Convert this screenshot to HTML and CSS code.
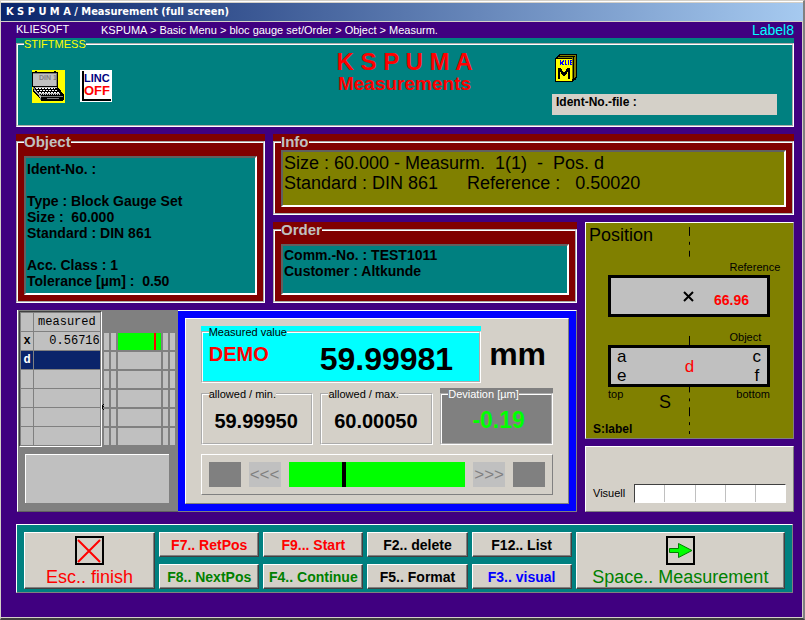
FILE: index.html
```html
<!DOCTYPE html>
<html lang="en">
<head>
<meta charset="utf-8">
<title>K S P U M A / Measurement (full screen)</title>
<link rel="stylesheet" href="styles.css">
</head>
<body>
<div class="window">
  <header class="titlebar">K S P U M A / Measurement (full screen)</header>
  <div class="desk">
    <nav class="crumbs">
      <span class="brand">KLIESOFT</span>
      <span class="path">KSPUMA &gt; Basic Menu &gt; bloc gauge set/Order &gt; Object &gt; Measurm.</span>
      <span class="tag">Label8</span>
    </nav>

    <section class="group teal banner">
      <fieldset class="frame">
        <legend class="small yellow">STIFTMESS</legend>
        <div class="banner-grid">
          <div class="tools">
            <svg class="laptop" width="33" height="33" viewBox="0 0 33 33" shape-rendering="crispEdges" role="img" aria-label="Notebook">
              <path fill="#ff0" d="M0 0h33v33H0z"/>
              <path d="M3 1h2v2H3zM22 1h2v2h-2zM0 2h26v15H0z"/>
              <path fill="#c0c0c0" d="M1 3h24v13H1z"/>
              <path fill="#808080" d="M1 3h24v1H1zM24 3h1v13h-1z"/>
              <path d="M1 17h25l6 8v4l-2 2H9l-1-2-7-8z"/>
              <path fill="#c0c0c0" d="M3 17h22v1H3zM5 23h23v1H5z"/>
              <path stroke="#fff" stroke-dasharray="2 1" d="M4 18.500h19M5 20.500h20M7 22.500h20"/>
              <path stroke="#c0c0c0" stroke-dasharray="1 1" d="M9 24.500h20"/>
              <path fill="none" stroke="#808080" d="M1 17.500l7 8v4M9 26.500h22M15 27.500v1h11v-1"/>
              <path fill="none" stroke="#c0c0c0" d="M2 20.500h1l6 7"/>
              <text class="laptop-text" x="7" y="10">DIN 1</text>
            </svg>
            <div class="linc"><span class="navy">LINC</span><span class="off">OFF</span></div>
          </div>
          <h1 class="heading"><span class="heading-top">K S P U M A</span><span class="heading-sub">Measurements</span></h1>
          <div class="ident">
            <svg width="24" height="29" viewBox="0 0 24 29" shape-rendering="crispEdges" role="img" aria-label="KLIE M">
              <path d="M4 0h18v24h-1v2h-2v1h-1v1H0V4h1V3h1V2h1V1h1z"/>
              <path fill="#808000" d="M5 1h16v22h-1V2H5zM3 3h15v22h-1V4H3z"/>
              <path fill="#808000" d="M19 3h1v21h-1z"/>
              <path fill="#ff0" d="M1 5h16v22H1z"/>
              <path fill="none" stroke="#00f" d="M5.500 6v5M8.500 6v1h-1v1h-1v1h1v1h1v1M10.500 6v4.500H12M13.500 6v5M17 6.500h-1.500v4H17M15 8.500h2"/>
              <path d="M3 14h3v1h1v2h1v1h2v-1h1v-2h1v-1h3v11h-2v-7h-1v2h-1v1h-1v1H8v-1H7v-1H6v-2H5v7H3z"/>
            </svg>
            <div class="ident-file">Ident-No.-file :</div>
          </div>
        </div>
      </fieldset>
    </section>

    <main class="board">
      <section class="group red object">
        <fieldset class="frame roomy">
          <legend>Object</legend>
          <div class="well teal">
            <p>Ident-No. :</p>
            <p class="after">Type : Block Gauge Set</p>
            <p>Size :&nbsp; 60.000</p>
            <p>Standard : DIN 861</p>
            <p class="after">Acc. Class : 1</p>
            <p>Tolerance [µm] :&nbsp; 0.50</p>
          </div>
        </fieldset>
      </section>

      <section class="group red info">
        <fieldset class="frame tight">
          <legend>Info</legend>
          <div class="well olive large">
            <p>Size : 60.000 - Measurm.&nbsp; 1(1)&nbsp; -&nbsp; Pos. d</p>
            <p>Standard : DIN 861 <span class="ref-value">Reference :&nbsp;&nbsp; 0.50020</span></p>
          </div>
        </fieldset>
      </section>

      <section class="group red order">
        <fieldset class="frame roomy">
          <legend>Order</legend>
          <div class="well teal">
            <p>Comm.-No. : TEST1011</p>
            <p>Customer : Altkunde</p>
          </div>
        </fieldset>
      </section>

      <section class="position raised olive">
        <svg class="axis" width="2" height="217" viewBox="0 0 2 217" preserveAspectRatio="none" aria-hidden="true">
          <path stroke="#000" fill="none" d="M.5 4v9M.5 19v3M.5 28v6M.5 114v12M.5 165v6M.5 177v3M.5 186v9M.5 201v3M.5 210v3"/>
        </svg>
        <h2>Position</h2>
        <p class="block-name">Reference</p>
        <div class="block">
          <svg class="cross" width="11" height="11" viewBox="0 0 11 11" role="img" aria-label="x"><path stroke="#000" stroke-width="2" d="M1 1l9 9M10 1l-9 9"/></svg>
          <span class="force">66.96</span>
        </div>
        <p class="block-name">Object</p>
        <div class="block letters">
          <div><span>a</span><span>e</span></div>
          <span class="active">d</span>
          <div><span>c</span><span>f</span></div>
        </div>
        <div class="feet"><span>top</span><span class="s-mark">S</span><span>bottom</span></div>
        <p class="s-label">S:label</p>
      </section>

      <section class="measure">
        <div class="log">
          <div class="log-top">
            <table class="values">
              <thead><tr><th></th><th scope="col">measured</th></tr></thead>
              <tbody>
                <tr><th scope="row">x</th><td>0.56716</td></tr>
                <tr class="current"><th scope="row">d</th><td></td></tr>
                <tr><th></th><td></td></tr>
                <tr><th></th><td></td></tr>
                <tr><th></th><td></td></tr>
                <tr><th></th><td></td></tr>
              </tbody>
            </table>
            <div class="bars">
              <svg class="tick" width="2" height="6" viewBox="0 0 2 6" shape-rendering="crispEdges" aria-hidden="true"><path d="M1 0h1v1H1zM0 1h1v4H0zM1 2h1v1H1zM1 5h1v1H1z"/></svg>
              <i></i><i></i><i class="good"></i><i></i><i></i>
              <i></i><i></i><i></i><i></i><i></i>
              <i></i><i></i><i></i><i></i><i></i>
              <i></i><i></i><i></i><i></i><i></i>
              <i></i><i></i><i></i><i></i><i></i>
              <i></i><i></i><i></i><i></i><i></i>
            </div>
          </div>
          <div class="note"></div>
        </div>

        <div class="display">
          <div class="display-inner">
            <div class="main-value">
              <div class="group cyan value-group">
                <fieldset class="frame value-frame">
                  <legend class="small black">Measured value</legend>
                  <div class="reading"><span class="demo">DEMO</span><output class="number">59.99981</output></div>
                </fieldset>
              </div>
              <span class="unit">mm</span>
            </div>
            <div class="limits">
              <div class="group">
                <fieldset class="frame limit"><legend class="small black">allowed / min.</legend><output>59.99950</output></fieldset>
              </div>
              <div class="group">
                <fieldset class="frame limit"><legend class="small black">allowed / max.</legend><output>60.00050</output></fieldset>
              </div>
              <div class="group grey">
                <fieldset class="frame limit deviation"><legend class="small white">Deviation [µm]</legend><output>-0.19</output></fieldset>
              </div>
            </div>
            <div class="scale raised">
              <span class="end"></span>
              <span class="arrows">&lt;&lt;&lt;</span>
              <span class="track"><span class="needle"></span></span>
              <span class="arrows">&gt;&gt;&gt;</span>
              <span class="end"></span>
            </div>
          </div>
        </div>
      </section>

      <section class="visual raised">
        <span>Visuell</span>
        <div class="cells"><i></i><i></i><i></i><i></i><i></i></div>
      </section>
    </main>

    <footer class="keys raised teal">
      <button class="key big red-text" type="button">
        <svg width="29" height="29" viewBox="0 0 29 29" aria-hidden="true"><path fill="none" stroke="#000" stroke-width="2" d="M1 1h27v27H1z"/><path stroke="#f00" stroke-width="2" d="M3 4l22 22M25 4L3 26"/></svg>
        Esc.. finish
      </button>
      <button class="key red-text" type="button">F7.. RetPos</button>
      <button class="key red-text" type="button">F9... Start</button>
      <button class="key" type="button">F2.. delete</button>
      <button class="key" type="button">F12.. List</button>
      <button class="key big green-text" type="button">
        <svg width="29" height="29" viewBox="0 0 29 29" aria-hidden="true"><path fill="none" stroke="#000" stroke-width="2" d="M1 1h27v27H1z"/><path fill="#0f0" stroke="#008000" d="M3.500 12.500h9v-5L26 14.500l-13.500 7v-5h-9z"/></svg>
        Space.. Measurement
      </button>
      <button class="key green-text" type="button">F8.. NextPos</button>
      <button class="key green-text" type="button">F4.. Continue</button>
      <button class="key" type="button">F5.. Format</button>
      <button class="key blue-text" type="button">F3.. visual</button>
    </footer>
  </div>
</div>
</body>
</html>
```
FILE: styles.css
```css
* { box-sizing: border-box; }

body {
  margin: 0;
  font-family: "Liberation Sans", Arial, sans-serif;
  font-size: 14px;
  line-height: 16px;
  color: #000;
}

p, h1, h2 { margin: 0; }

.window {
  display: flex;
  flex-direction: column;
  min-height: 100vh;
  background: #400080;
  border: 1px solid #d4d0c8;
  border-right: 2px solid #808080;
  border-bottom: 2px solid #404040;
  box-shadow: inset 0 1px #fff, inset -1px -1px #d4d0c8;
}

.titlebar {
  margin-top: 1px;
  padding-left: 5px;
  border-top: 1px solid #d4d0c8;
  border-bottom: 1px solid #d4d0c8;
  background: linear-gradient(90deg, #0a246a, #a6caf0);
  color: #fff;
  font: bold 11px/18px "DejaVu Sans Condensed", "DejaVu Sans", sans-serif;
}

.desk { padding: 0 9px 0 15px; }

.crumbs {
  display: grid;
  grid-template-columns: 85px 1fr auto;
  height: 16px;
  color: #fff;
  font-size: 11px;
}
.brand { line-height: 14px; }
.tag { color: #0ff; font-size: 14px; }

.teal { background: #008080; }
.olive { background: #808000; }
.red { background: #800000; }
.cyan { background: #0ff; }
.grey { background: #808080; }

.raised {
  border: 1px solid;
  border-color: #fff #808080 #808080 #fff;
}

.group { display: flex; min-width: 0; }

.frame {
  flex: 1;
  display: flex;
  flex-direction: column;
  min-width: 0;
  margin: 0;
  padding: 0;
  border: 2px groove #fff;
}
.frame legend {
  padding: 0;
  color: #c0c0c0;
  font-size: 15px;
  font-weight: bold;
  line-height: 16px;
}
.frame legend.small { margin-left: 6px; font-size: 11px; font-weight: normal; line-height: 12px; }
.frame legend.yellow { color: #ff0; }
.frame legend.black { color: #000; }
.frame legend.white { color: #fff; }
.frame.roomy { padding: 6px; }
.frame.tight { padding: 0 6px 6px; }

.well {
  flex: 1;
  padding: 1px 1px 0;
  border: 2px solid;
  border-color: #606060 #fff #fff #606060;
  font-weight: bold;
  white-space: nowrap;
}
.object .well { padding-top: 3px; }
.well.large { font-size: 18px; line-height: 20px; font-weight: normal; }
.after { margin-top: 16px; }
.ref-value { margin-left: 24px; }

/* Banner */
.banner-grid {
  display: grid;
  grid-template-columns: 225fr 295fr 225fr;
  padding: 0 15px 10px 14px;
}
.tools { display: flex; gap: 15px; padding-top: 20px; }
.laptop-text { font: bold 7px "Liberation Sans", sans-serif; fill: #808080; }
.linc {
  display: flex;
  flex-direction: column;
  width: 32px;
  height: 32px;
  padding-left: 4px;
  background: linear-gradient(#000, #000) 2px 1px / 2px 30px no-repeat, linear-gradient(#000, #000) 2px 29px / 29px 2px no-repeat, #fff;
  font-size: 11px;
  line-height: 16px;
  font-weight: bold;
}
.navy { color: #000080; }
.off { color: #f00; font-size: 13px; line-height: 10px; }
.heading {
  display: flex;
  flex-direction: column;
  align-items: center;
  color: #f00;
}
.heading-top { font-size: 24px; line-height: 24px; }
.heading-sub { font-size: 19px; line-height: 20px; }
.ident { padding-top: 4px; }
.ident svg { display: block; margin-left: 3px; }
.ident-file {
  min-height: 21px;
  margin-top: 11px;
  padding-left: 4px;
  background: #d4d0c8;
  font-size: 12px;
  font-weight: bold;
}

/* Board */
.board {
  display: grid;
  grid-template-columns: 249fr 304fr 209fr;
  grid-template-rows: minmax(81px, auto) minmax(81px, auto) minmax(129px, auto) minmax(66px, auto);
  gap: 7px 8px;
  margin-top: 7px;
}
.object { grid-area: 1 / 1 / 3 / 2; }
.info { grid-area: 1 / 2 / 2 / 4; }
.order { grid-area: 2 / 2 / 3 / 3; }
.position { grid-area: 2 / 3 / 4 / 4; }
.measure { grid-area: 3 / 1 / 5 / 3; }
.visual { grid-area: 4 / 3 / 5 / 4; }

/* Position */
.position { position: relative; padding: 2px 23px 0 22px; }
.axis { position: absolute; left: 50%; top: 0; height: 100%; margin-left: -1px; }
.position h2 { margin: 0 0 15px -19px; font-size: 18px; line-height: 20px; font-weight: normal; }
.block-name { margin-left: 75%; font-size: 11px; line-height: 14px; }
.block {
  position: relative;
  display: flex;
  align-items: center;
  justify-content: flex-end;
  height: 42px;
  margin: 1px 0 13px;
  padding: 0 18px 0 6px;
  border: 3px solid #000;
  background: #c0c0c0;
}
.cross { margin-right: 20px; }
.force { padding-top: 8px; color: #f00; font-weight: bold; }
.block.letters { justify-content: space-between; margin-bottom: 0; padding: 0 6px; font-size: 17px; line-height: 19px; }
.letters div { display: flex; flex-direction: column; text-align: center; }
.active { color: #f00; }
.feet { display: grid; grid-template-columns: 51px 1fr auto; font-size: 11px; line-height: 14px; }
.s-mark { padding-top: 7px; font-size: 18px; line-height: 16px; }
.s-label { margin: 12px 0 0 -15px; font-size: 12px; line-height: 14px; font-weight: bold; }

/* Measurement */
.measure { display: grid; grid-template-columns: 161fr 400fr; margin-left: 1px; }
.log {
  display: flex;
  flex-direction: column;
  border-left: 1px solid #fff;
  border-bottom: 1px solid #606060;
  background: #808080;
}
.log-top { display: flex; gap: 2px; padding: 1px 3px 0 1px; }
.values {
  flex: 82;
  border-collapse: separate;
  border-spacing: 1px;
  border: 1px solid;
  border-color: #404040 #fff #fff #404040;
  background: #808080;
  font: 12px/14px "Liberation Mono", monospace;
}
.values th, .values td { height: 18px; padding: 0; background: #c0c0c0; }
.values th:first-child { width: 12px; }
.values thead th { font-weight: normal; }
.values td { text-align: right; }
.values .current th, .values .current td { background: #0a246a; color: #fff; }
.bars {
  position: relative;
  flex: 72;
  display: grid;
  grid-template-columns: 5fr 5fr 44fr 5fr 5fr;
  grid-auto-rows: 17px;
  gap: 2px;
  padding-top: 22px;
}
.bars i { background: #c0c0c0; }
.bars .good { background: linear-gradient(#f00, #f00) 88% 0 / 2px 100% no-repeat, #0f0; }
.tick { position: absolute; right: 100%; top: 93px; }
.note {
  flex: 1;
  margin: 7px 9px 8px 7px;
  border-top: 1px solid #fff;
  border-left: 1px solid #fff;
  background: #c0c0c0;
}

.display {
  padding: 7px;
  border-top: 1px solid #fff;
  border-right: 1px solid #808080;
  border-bottom: 1px solid #808080;
  background: #00f;
}
.display-inner {
  height: 100%;
  padding: 7px 15px 0;
  border: 1px solid;
  border-color: #fff #808080 #808080 #fff;
  background: #d4d0c8;
}
.main-value { display: grid; grid-template-columns: 281fr 72fr; }
.reading { display: flex; justify-content: space-between; padding: 0 26px 0 6px; }
.demo { color: #f00; font-size: 20px; line-height: 32px; font-weight: bold; }
.number { font-size: 32px; line-height: 42px; font-weight: bold; }
.unit { padding-left: 8px; font-size: 32px; line-height: 57px; font-weight: bold; }
.limits { display: grid; grid-template-columns: 1fr 1fr 1fr; gap: 7px; margin-top: 5px; }
.limit { text-align: center; font-size: 20px; font-weight: bold; }
.limit legend { text-align: left; }
.limit output { padding: 6px 2px 7px 0; line-height: 30px; }
.limit.deviation { color: #0f0; font-size: 23px; }
.limit.deviation output { padding: 5px 0 8px 4px; }
.scale { display: flex; gap: 8px; margin-top: 9px; padding: 7px; height: 41px; }
.end { flex: 32; background: #808080; }
.arrows {
  flex: 32;
  min-width: 0;
  background: #c0c0c0;
  color: #808080;
  font-size: 17px;
  line-height: 25px;
  text-align: center;
}
.track { flex: 177; background: #0f0; }
.needle { display: block; width: 4px; height: 100%; margin-left: 30%; background: #000; }

/* Visual check */
.visual {
  display: flex;
  align-items: flex-end;
  gap: 9px;
  padding: 0 7px 8px;
  background: #d4d0c8;
  font-size: 11px;
  line-height: 20px;
}
.cells {
  flex: 1;
  display: flex;
  gap: 1px;
  height: 19px;
  border: 1px solid;
  border-color: #404040 #fff #fff #404040;
  background: #c0c0c0;
}
.cells i { flex: 1; background: #fff; }

/* Function keys */
.keys {
  display: grid;
  grid-template-columns: 131fr 100fr 100fr 100fr 100fr 209fr;
  gap: 7px 4px;
  margin: 12px 1px 0 0;
  padding: 7px 7px 3px;
}
.key {
  min-width: 0;
  padding: 0;
  height: 25px;
  border: 1px solid;
  border-color: #fff #404040 #404040 #fff;
  box-shadow: inset -1px -1px #808080;
  background: #d4d0c8;
  color: #000;
  font: bold 14px/20px "Liberation Sans", Arial, sans-serif;
  white-space: nowrap;
}
.key.big {
  grid-row: span 2;
  display: flex;
  flex-direction: column;
  align-items: center;
  gap: 2px;
  height: auto;
  padding-top: 3px;
  font-size: 18px;
  line-height: 20px;
  font-weight: normal;
}
.red-text { color: #f00; }
.green-text { color: #008000; }
.blue-text { color: #00f; }
```
